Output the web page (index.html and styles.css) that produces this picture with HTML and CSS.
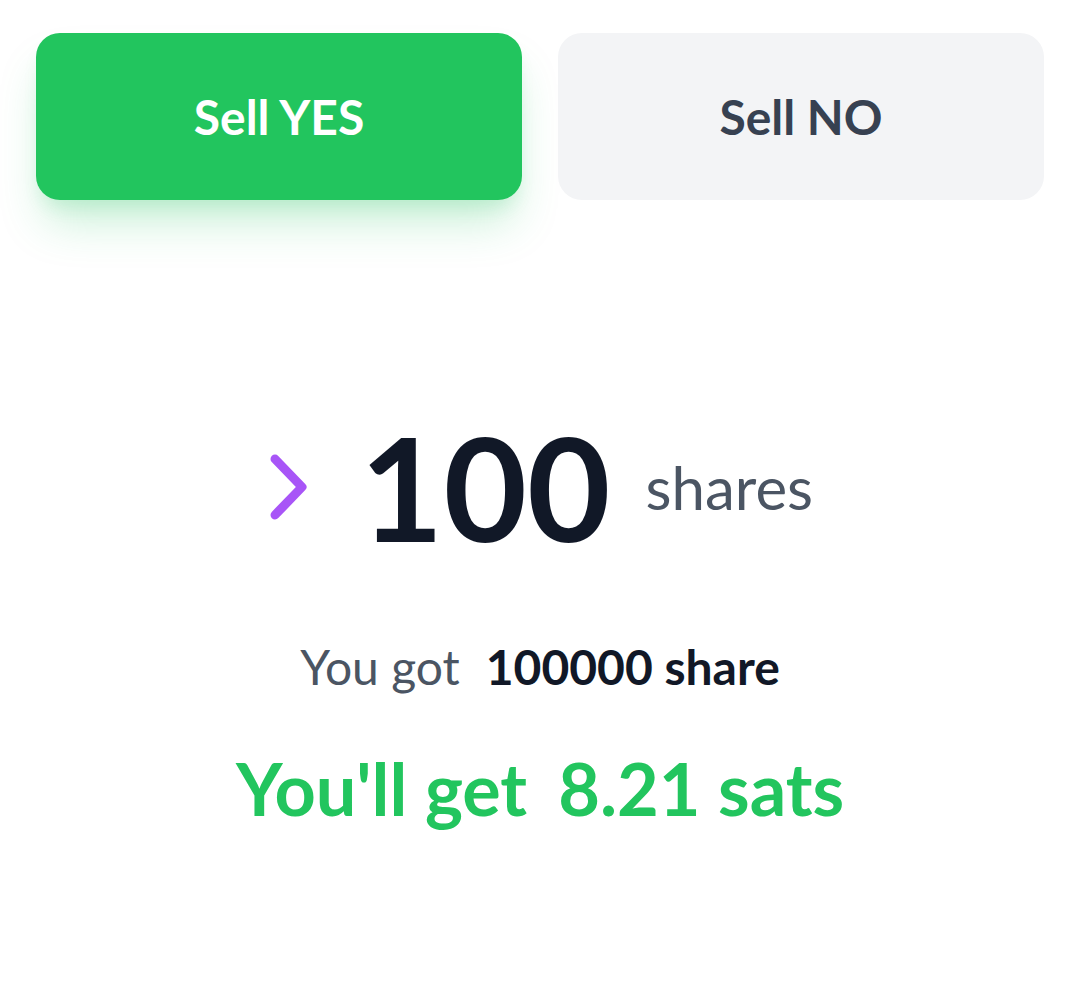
FILE: index.html
```html
<!DOCTYPE html>
<html lang="en">
<head>
    <meta charset="UTF-8">
    <meta name="viewport" content="width=device-width, initial-scale=1.0">
    <title>Sell shares</title>
    <link rel="stylesheet" href="styles.css">
</head>
<body>

<div class="sides">
    <button class="side side-yes">Sell YES</button>
    <button class="side side-no">Sell NO</button>
</div>

<div class="amount">
    <svg class="chevron" width="44" height="72" viewBox="0 0 44 72">
        <path d="M8 8 L35 36 L8 64" fill="none" stroke="#a855f7" stroke-width="9" stroke-linecap="round" stroke-linejoin="round"/>
    </svg>
    <span class="amount-value">100</span>
    <span class="amount-unit">shares</span>
</div>

<p class="owned">
    <span class="owned-label">You got</span>
    <span class="owned-value">100000 share</span>
</p>

<p class="payout">
    <span>You'll get</span>
    <span>8.21 sats</span>
</p>

</body>
</html>
```

FILE: styles.css
```css
body {
    margin: 0;
    padding: 33px 36px 0;
    font-family: Lato, "Noto Sans", sans-serif;
    background: #fff;
}
.sides {
    display: flex;
    gap: 36px;
}
.side {
    flex: 1;
    height: 167px;
    border: none;
    border-radius: 24px;
    font-family: inherit;
    font-size: 48px;
    font-weight: 700;
    cursor: pointer;
}
.side-yes {
    background: #22c55e;
    color: #fff;
    box-shadow: 0 30px 45px -9px rgba(34, 197, 94, 0.25), 0 12px 18px -6px rgba(34, 197, 94, 0.15);
}
.side-no {
    background: #f3f4f6;
    color: #374151;
}
.amount {
    display: flex;
    align-items: center;
    justify-content: center;
    margin-top: 215px;
    height: 144px;
}
.chevron {
    display: block;
    margin-right: 49px;
}
.amount-value {
    font-size: 144px;
    font-weight: 700;
    line-height: 1;
    color: #111827;
}
.amount-unit {
    margin-left: 35px;
    font-size: 60px;
    line-height: 1;
    color: #4b5563;
}
.owned {
    display: flex;
    justify-content: center;
    gap: 26px;
    margin: 72px 0 0;
    font-size: 48px;
    line-height: 72px;
}
.owned-label {
    color: #4b5563;
}
.owned-value {
    font-weight: 700;
    color: #111827;
}
.payout {
    display: flex;
    justify-content: center;
    gap: 31px;
    margin: 37px 0 0;
    font-size: 72px;
    line-height: 96px;
    font-weight: 700;
    color: #22c55e;
}
```
